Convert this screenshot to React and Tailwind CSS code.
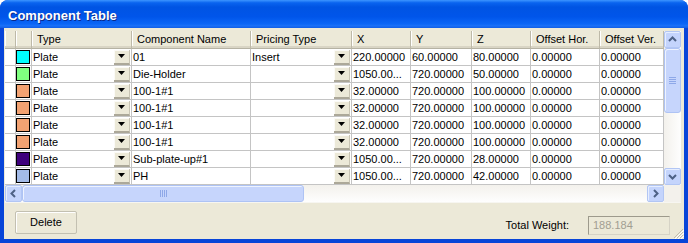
const font = "font-['Liberation_Sans',Arial,sans-serif]";

const rows = [
  { color: "bg-[#00ffff]", name: "01", pricing: "Insert", x: "220.00000", y: "60.00000", z: "80.00000" },
  { color: "bg-[#80ff80]", name: "Die-Holder", pricing: "", x: "1050.00...", y: "720.00000", z: "50.00000" },
  { color: "bg-[#f2a272]", name: "100-1#1", pricing: "", x: "32.00000", y: "720.00000", z: "100.00000" },
  { color: "bg-[#f2a272]", name: "100-1#1", pricing: "", x: "32.00000", y: "720.00000", z: "100.00000" },
  { color: "bg-[#f2a272]", name: "100-1#1", pricing: "", x: "32.00000", y: "720.00000", z: "100.00000" },
  { color: "bg-[#f2a272]", name: "100-1#1", pricing: "", x: "32.00000", y: "720.00000", z: "100.00000" },
  { color: "bg-[#3e007c]", name: "Sub-plate-up#1", pricing: "", x: "1050.00...", y: "720.00000", z: "28.00000" },
  { color: "bg-[#a3bbe8]", name: "PH", pricing: "", x: "1050.00...", y: "720.00000", z: "42.00000" },
];

const headers = [
  { w: "w-[11px]", label: "" },
  { w: "w-[16px]", label: "" },
  { w: "w-[100px]", label: "Type" },
  { w: "w-[119px]", label: "Component Name" },
  { w: "w-[101px]", label: "Pricing Type" },
  { w: "w-[59px]", label: "X" },
  { w: "w-[61px]", label: "Y" },
  { w: "w-[59px]", label: "Z" },
  { w: "w-[69px]", label: "Offset Hor." },
  { w: "w-[64px]", label: "Offset Ver." },
];

const cell = "h-[17px] shrink-0 flex items-center pt-[1px] border-r border-b border-[#c4c4c4] bg-white overflow-hidden whitespace-nowrap pl-[1px]";

function DropButton() {
  return (
    <div className="ml-auto mr-[1px] w-[16px] h-[15px] shrink-0 flex items-center justify-center bg-[#ece9d8] border-b-2 border-b-[#aca899] border-r border-r-[#c9c5b5] shadow-[inset_1px_1px_0_#fbfaf6]">
      <svg width="7" height="4" viewBox="0 0 7 4">
        <path d="M0 0h7L3.5 4z" fill="#000" />
      </svg>
    </div>
  );
}

function Chevron({ dir }) {
  const d = {
    up: "M1 5l3.5-3.5L8 5",
    down: "M1 2l3.5 3.5L8 2",
    left: "M5 1L1.5 4.5 5 8",
    right: "M2 1l3.5 3.5L2 8",
  }[dir];
  const horiz = dir === "left" || dir === "right";
  return (
    <svg width={horiz ? 7 : 9} height={horiz ? 9 : 7} viewBox={horiz ? "0 0 7 9" : "0 0 9 7"}>
      <path d={d} fill="none" stroke="#4d6185" strokeWidth="2" />
    </svg>
  );
}

function ArrowButton({ dir, className }) {
  return (
    <div className={`shrink-0 flex items-center justify-center bg-[#c4d4fc] border border-[#b2c6f4] rounded-[2px] shadow-[inset_1px_1px_0_#e6eeff] ${className}`}>
      <Chevron dir={dir} />
    </div>
  );
}

export default function App() {
  return (
    <div className={`w-[688px] h-[243px] flex flex-col bg-[#0845d8] rounded-t-[8px] overflow-hidden ${font}`}>
      <div className="h-[28px] shrink-0 flex items-center pl-[8px] pt-[3px] bg-[linear-gradient(180deg,#3d95ff_0%,#0a64ef_10%,#0054e3_25%,#0055ea_60%,#0a66f6_85%,#1a70f8_92%,#0f5ee6_100%)]">
        <span className="text-white font-bold text-[13px] [text-shadow:1px_1px_0_#0b2a8a]">Component Table</span>
      </div>

      <div className="relative flex-1 flex flex-col mx-[4px] mb-[4px] bg-[#ece9d8] pt-[3px] pl-[1px] pr-[3px]">
        <div className="flex">
          <div className="flex flex-col w-[659px] bg-white">
            <div className="flex">
              {headers.map((h, i) => (
                <div
                  key={i}
                  className={`${h.w} h-[18px] shrink-0 flex items-center pl-[5px] bg-[#ece9d8] border-r border-[#bdb9a8] border-b border-b-[#b5b2a3] shadow-[inset_0_-2px_0_#d9d5c5,inset_1px_0_0_#fff] text-[11px] text-black whitespace-nowrap overflow-hidden`}
                >
                  {h.label}
                </div>
              ))}
            </div>
            {rows.map((r, i) => (
              <div key={i} className="flex text-[11px] text-black">
                <div className={`${cell} w-[11px]`} />
                <div className={`${cell} w-[16px] !pl-0 !pt-0`}>
                  <div className={`w-[14px] h-[14px] border border-black ${r.color}`} />
                </div>
                <div className={`${cell} w-[100px] !pt-0`}>
                  <span className="pt-[1px]">Plate</span>
                  <DropButton />
                </div>
                <div className={`${cell} w-[119px]`}>{r.name}</div>
                <div className={`${cell} w-[101px] !pt-0`}>
                  <span className="pt-[1px]">{r.pricing}</span>
                  <DropButton />
                </div>
                <div className={`${cell} w-[59px]`}>{r.x}</div>
                <div className={`${cell} w-[61px]`}>{r.y}</div>
                <div className={`${cell} w-[59px]`}>{r.z}</div>
                <div className={`${cell} w-[69px]`}>0.00000</div>
                <div className={`${cell} w-[64px]`}>0.00000</div>
              </div>
            ))}
          </div>

          <div className="w-[17px] flex flex-col bg-[linear-gradient(90deg,#f3f1ec,#fefefe)]">
            <ArrowButton dir="up" className="h-[17px] w-[17px]" />
            <div className="h-[65px] flex items-center justify-center bg-[#c6d5fc] border border-[#aec3f4] rounded-[3px] shadow-[inset_1px_1px_0_#eef3ff]">
              <div className="flex flex-col gap-[1px]">
                <div className="w-[7px] h-[1px] bg-[#8ea8e8]" />
                <div className="w-[7px] h-[1px] bg-[#8ea8e8]" />
                <div className="w-[7px] h-[1px] bg-[#8ea8e8]" />
                <div className="w-[7px] h-[1px] bg-[#8ea8e8]" />
              </div>
            </div>
            <div className="flex-1" />
            <ArrowButton dir="down" className="h-[17px] w-[17px]" />
          </div>
        </div>

        <div className="flex h-[17px]">
          <div className="w-[659px] flex bg-[linear-gradient(180deg,#f3f1ec,#fefefe)]">
            <ArrowButton dir="left" className="w-[17px] h-[17px]" />
            <div className="w-[282px] flex items-center justify-center bg-[#c6d5fc] border border-[#aec3f4] rounded-[3px] shadow-[inset_1px_1px_0_#eef3ff]">
              <div className="flex gap-[1px]">
                <div className="w-[1px] h-[7px] bg-[#8ea8e8]" />
                <div className="w-[1px] h-[7px] bg-[#8ea8e8]" />
                <div className="w-[1px] h-[7px] bg-[#8ea8e8]" />
                <div className="w-[1px] h-[7px] bg-[#8ea8e8]" />
              </div>
            </div>
            <div className="flex-1" />
            <ArrowButton dir="right" className="w-[17px] h-[17px]" />
          </div>
          <div className="w-[17px] bg-[#f3f1ec]" />
        </div>

        <div className="flex-1 flex items-start pt-[8px] pl-[10px] pr-[11px] border-t border-[#f7f6f1]">
          <button className="w-[62px] h-[23px] text-[11px] text-black bg-[#ece9d8] border border-[#c3c0b1] rounded-[2px] shadow-[inset_1px_1px_0_#fff]">
            Delete
          </button>
          <div className="ml-auto mt-[5px] flex items-center gap-[19px]">
            <span className="text-[11px] text-black">Total Weight:</span>
            <div className="w-[82px] h-[19px] flex items-center pl-[4px] text-[11px] text-[#a19e92] bg-[#ece9d8] border border-t-[#9d9a8c] border-l-[#9d9a8c] border-r-[#d6d3c6] border-b-[#d6d3c6]">
              188.184
            </div>
          </div>
        </div>

        <svg className="absolute right-0 bottom-0" width="12" height="12" viewBox="0 0 12 12">
          <path d="M11 2L2 11M11 5L5 11M11 8L8 11" stroke="#c1bdad" strokeWidth="1" />
          <path d="M12 3L3 12M12 6L6 12M12 9L9 12" stroke="#fff" strokeWidth="1" />
        </svg>
      </div>
    </div>
  );
}
